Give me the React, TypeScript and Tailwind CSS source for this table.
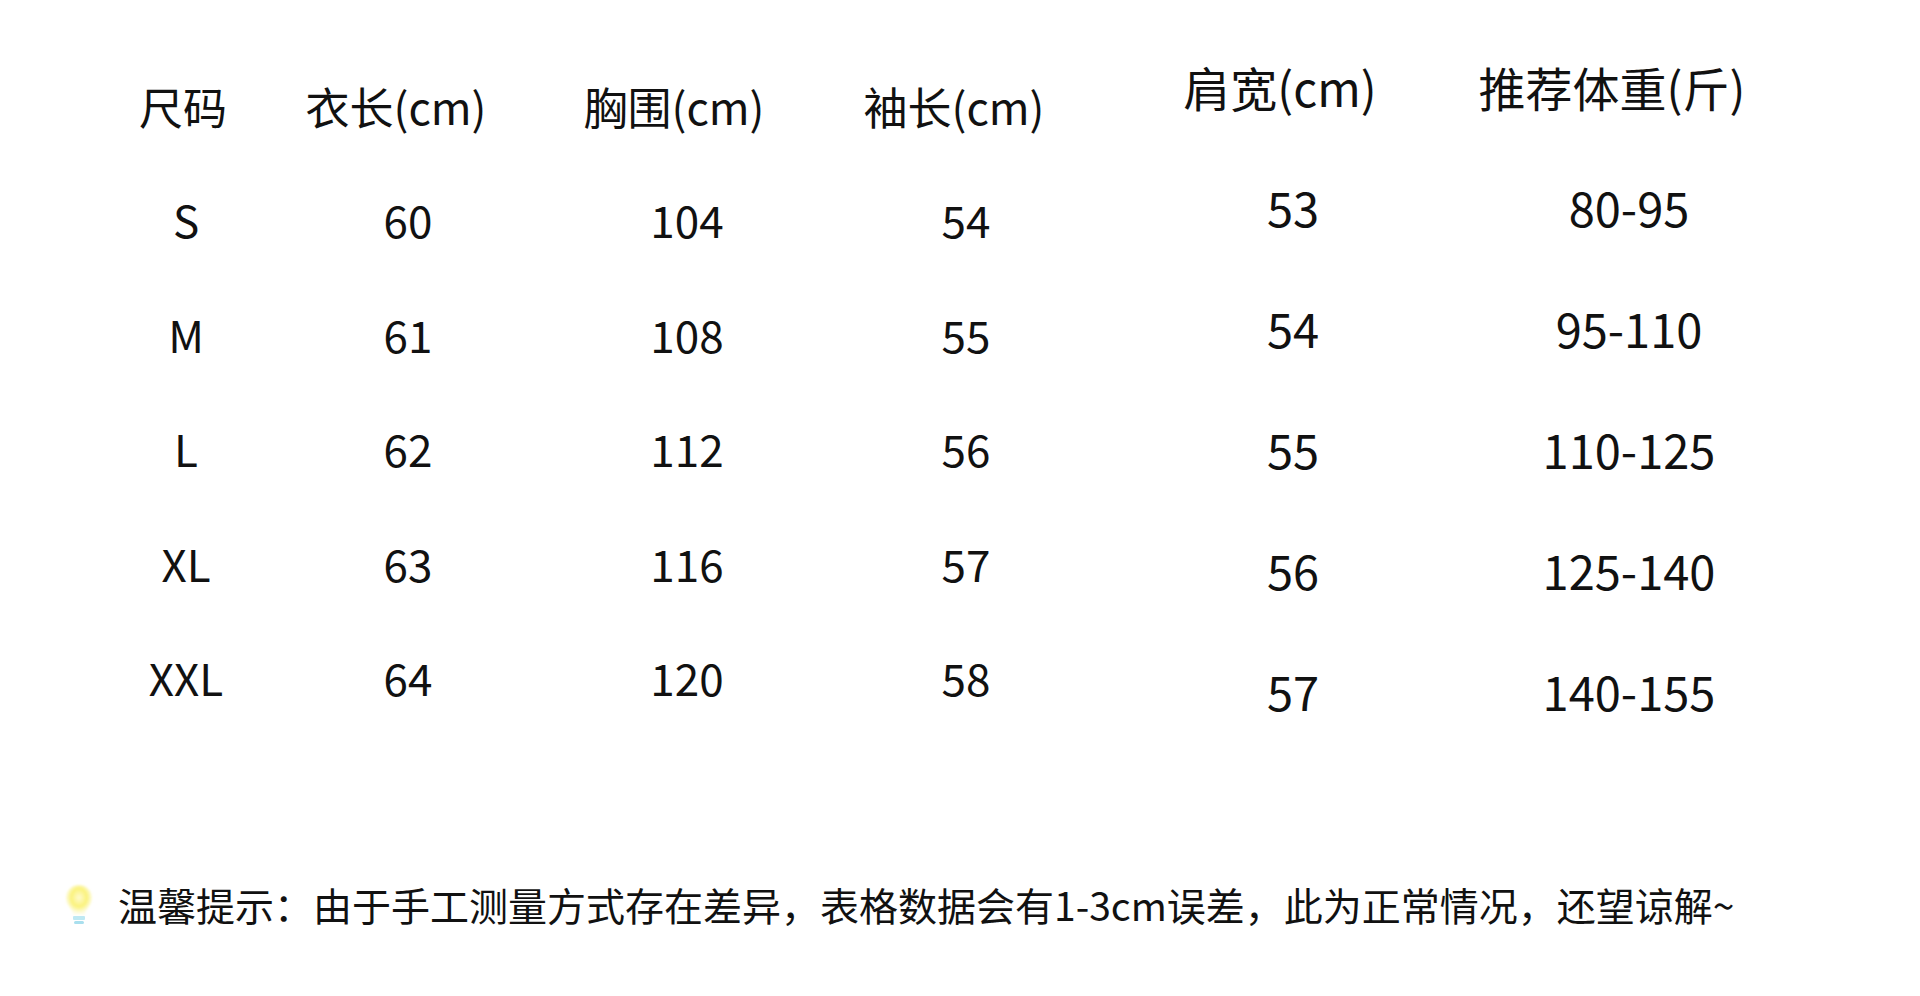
import React from "react";

const font = { fontFamily: '"Noto Sans CJK SC", "Noto Sans", sans-serif' };

type Col = { title: string; w: string; hp: string; data: string[] };

const leftCols: Col[] = [
  { title: "尺码", w: "w-[222px]", hp: "pr-[6px]", data: ["S", "M", "L", "XL", "XXL"] },
  { title: "衣长(cm)", w: "w-[222px]", hp: "pr-[24px]", data: ["60", "61", "62", "63", "64"] },
  { title: "胸围(cm)", w: "w-[336px]", hp: "pr-[26px]", data: ["104", "108", "112", "116", "120"] },
  { title: "袖长(cm)", w: "w-[222px]", hp: "pr-[24px]", data: ["54", "55", "56", "57", "58"] },
];

const rightCols: Col[] = [
  { title: "肩宽(cm)", w: "w-[432px]", hp: "pr-[26px]", data: ["53", "54", "55", "56", "57"] },
  { title: "推荐体重(斤)", w: "w-[240px]", hp: "pr-[34px]", data: ["80-95", "95-110", "110-125", "125-140", "140-155"] },
];

function Bulb() {
  return (
    <svg width="34" height="46" viewBox="0 0 34 46" className="shrink-0">
      <defs>
        <radialGradient id="glow" cx="50%" cy="42%" r="55%">
          <stop offset="0%" stopColor="#fffbd0" />
          <stop offset="55%" stopColor="#fbf27a" />
          <stop offset="100%" stopColor="#fbf6a8" stopOpacity="0.2" />
        </radialGradient>
        <filter id="soft" x="-30%" y="-30%" width="160%" height="160%">
          <feGaussianBlur stdDeviation="1.2" />
        </filter>
      </defs>
      <path
        d="M17 4 C9 4 4 10 4 17 C4 23 8 26 10 30 L11 34 L23 34 L24 30 C26 26 30 23 30 17 C30 10 25 4 17 4 Z"
        fill="url(#glow)"
        filter="url(#soft)"
      />
      <rect x="11" y="35" width="12" height="4" rx="1" fill="#bfe9f3" />
      <rect x="12" y="40" width="10" height="3" rx="1.5" fill="#a9dfee" />
    </svg>
  );
}

function Column({ col, rowH, headGap, headSize, dataSize }: { col: Col; rowH: string; headGap: string; headSize: string; dataSize: string }) {
  return (
    <div className={`${col.w} flex flex-col items-center shrink-0`}>
      <div className={`h-[60px] leading-[60px] ${headSize} ${col.hp} whitespace-nowrap`}>{col.title}</div>
      <div className={headGap} />
      {col.data.map((d) => (
        <div key={d} className={`${rowH} flex items-center justify-center ${dataSize} whitespace-nowrap`}>
          {d}
        </div>
      ))}
    </div>
  );
}

export default function App() {
  return (
    <div className="w-[1920px] h-[996px] bg-white text-[#111] overflow-hidden" style={font}>
      <div className="flex items-start pl-[75px]">
        <div className="flex pt-[76px]">
          {leftCols.map((c) => (
            <Column key={c.title} col={c} rowH="h-[114.5px]" headGap="h-[26px]" headSize="text-[44px]" dataSize="text-[44px]" />
          ))}
        </div>
        <div className="flex pt-[57px]">
          {rightCols.map((c) => (
            <Column key={c.title} col={c} rowH="h-[121px]" headGap="h-[30px]" headSize="text-[47px]" dataSize="text-[47px]" />
          ))}
        </div>
      </div>
      <div className="flex items-center pl-[62px] mt-[124px] gap-[22px]">
        <Bulb />
        <div className="text-[39px] leading-[56px] whitespace-nowrap">
          温馨提示：由于手工测量方式存在差异，表格数据会有1-3cm误差，此为正常情况，还望谅解~
        </div>
      </div>
    </div>
  );
}
